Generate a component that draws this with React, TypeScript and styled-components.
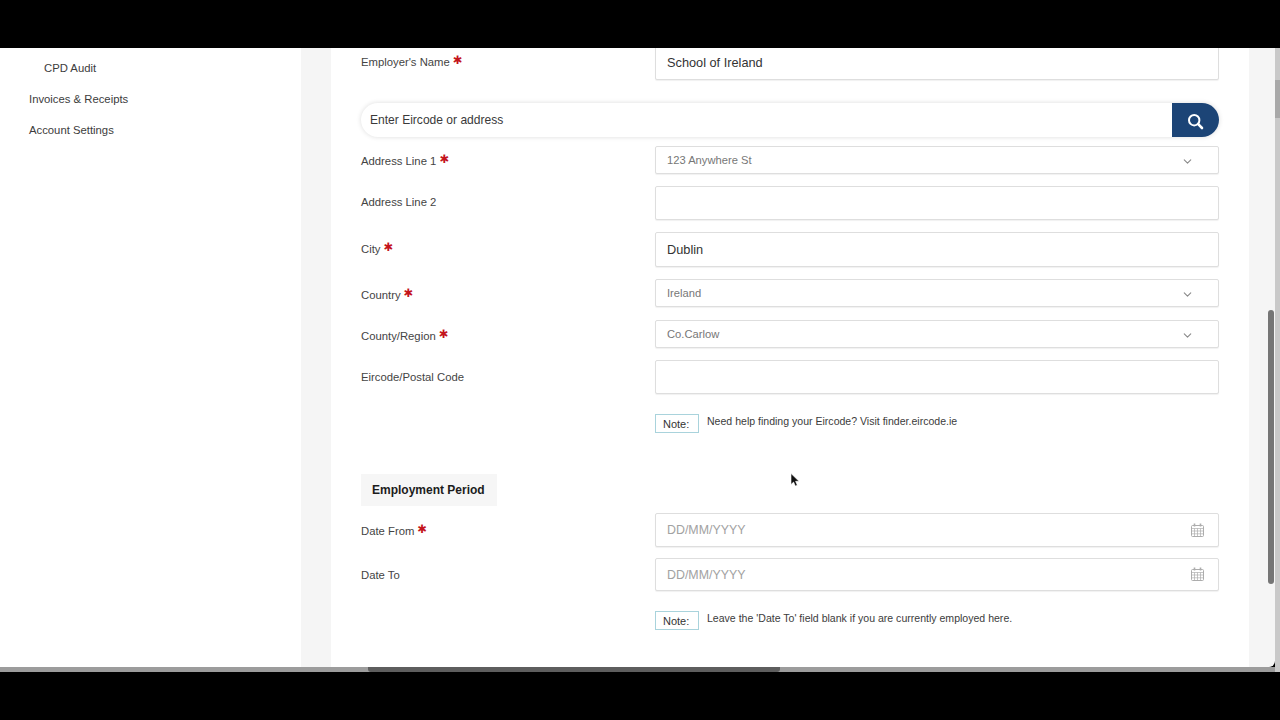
import React from 'react';
import styled, {createGlobalStyle} from 'styled-components';
import {ChevronDown} from 'lucide-react';

const GlobalStyle = createGlobalStyle`
  html, body {
    margin: 0;
    height: 100%;
    background: #000;
    overflow: hidden;
  }
  body {
    font-family: "Liberation Sans", Arial, sans-serif;
  }
`;

const Screen = styled.div`
  width: 1280px;
  height: 720px;
  padding-top: 48px;
  box-sizing: border-box;
  background: #000;
`;

const Desktop = styled.div`
  display: flex;
  height: 624px;
`;

const Browser = styled.div`
  width: 1275px;
  display: flex;
  flex-direction: column;
`;

const Page = styled.div`
  height: 619px;
  display: flex;
  background: #f5f5f5;
  overflow: hidden;
  border-bottom-right-radius: 6px;
`;

const Sidebar = styled.nav`
  width: 301px;
  background: #fff;
  padding: 13px 0 0 29px;
  box-sizing: border-box;
  display: flex;
  flex-direction: column;
  gap: 16px;
`;

const NavItem = styled.a<{$sub?: boolean}>`
  font-size: 11.3px;
  line-height: 15px;
  color: #3c3c3c;
  margin-left: ${p => (p.$sub ? '15px' : '0')};
`;

const Main = styled.main`
  margin-left: 30px;
  width: 918px;
  background: #fff;
  padding: 0 30px;
  box-sizing: border-box;
  overflow: hidden;
`;

const Rail = styled.div`
  flex: 1;
  padding: 262px 0 0 19px;
`;

const Thumb = styled.div`
  width: 6px;
  height: 274px;
  border-radius: 3px;
  background: #767676;
`;

const BottomEdge = styled.div`
  height: 5px;
  background: #9c9c9c;
  display: flex;
`;

const BottomTab = styled.div`
  margin-left: 368px;
  width: 412px;
  background: #5e5e5e;
  border-radius: 0 0 3px 3px;
`;

const RightEdge = styled.div`
  width: 5px;
  height: 624px;
  padding-top: 32px;
  box-sizing: border-box;
  background: #c9c9c9;
`;

const RightTab = styled.div`
  height: 38px;
  background: #a9a9a9;
`;

const Row = styled.div<{$top: number}>`
  display: grid;
  grid-template-columns: 294px 564px;
  align-items: center;
  margin-top: ${p => p.$top}px;
`;

const Label = styled.label<{$shift?: number}>`
  font-size: 11.3px;
  line-height: 15px;
  color: #444;
  display: flex;
  align-items: flex-start;
  gap: 3px;
  margin-top: ${p => p.$shift ?? 0}px;
`;

const Star = styled.span`
  font-family: "DejaVu Sans", sans-serif;
  font-size: 11.5px;
  line-height: 11px;
  color: #c4141c;
`;

const Field = styled.div<{$h: number}>`
  height: ${p => p.$h}px;
  box-sizing: border-box;
  border: 1px solid #dedede;
  border-radius: 2px;
  box-shadow: 0 1px 1px rgba(0, 0, 0, 0.06);
  padding: 0 11px;
  display: flex;
  align-items: center;
  justify-content: space-between;
  font-size: 12.75px;
  color: #333;
  background: #fff;
`;

const SelectText = styled.span`
  font-size: 11.2px;
  color: #777;
`;

const Placeholder = styled.span`
  font-size: 12.4px;
  color: #a2a2a2;
`;

const Chevron = styled(ChevronDown)`
  width: 13px;
  height: 13px;
  margin: 3px 13px 0 0;
  color: #8a8a8a;
`;

const CalendarSvg = styled.svg`
  width: 13px;
  height: 14px;
  margin: 0 3px 1px 0;
  color: #adadad;
`;

const SearchBar = styled.div`
  margin-top: 23px;
  height: 34px;
  width: 858px;
  display: flex;
  border-radius: 17px;
  box-shadow: 0 0 5px rgba(0, 0, 0, 0.14);
`;

const SearchText = styled.div`
  flex: 1;
  padding-left: 9px;
  display: flex;
  align-items: center;
  font-size: 12.05px;
  color: #3a3a3a;
`;

const SearchButton = styled.button`
  width: 47px;
  border: 0;
  padding: 2px 0 0 0;
  background: #1c4476;
  border-radius: 0 17px 17px 0;
  display: flex;
  align-items: center;
  justify-content: center;
`;

const NoteRow = styled.div<{$top: number}>`
  margin: ${p => p.$top}px 0 0 294px;
  display: flex;
  gap: 8px;
  align-items: flex-start;
`;

const NoteTag = styled.div`
  width: 44px;
  height: 19px;
  box-sizing: border-box;
  border: 1px solid #a9d3dc;
  padding-left: 7px;
  display: flex;
  align-items: center;
  font-size: 11px;
  color: #333;
`;

const NoteText = styled.p`
  margin: 0;
  font-size: 10.55px;
  line-height: 14px;
  color: #3c3c3c;
`;

const SectionChip = styled.div`
  margin-top: 41px;
  width: 136px;
  height: 32px;
  box-sizing: border-box;
  padding-left: 11px;
  display: flex;
  align-items: center;
  background: #f6f6f6;
  font-size: 12px;
  font-weight: 700;
  color: #1c1c1c;
`;

const CursorSvg = styled.svg`
  position: absolute;
  left: 790px;
  top: 473px;
  width: 10px;
  height: 15px;
`;

const Calendar = () => (
  <CalendarSvg viewBox="0 0 13 14" fill="none" stroke="currentColor" strokeWidth="1">
    <rect x="0.5" y="2.5" width="12" height="11" rx="1" />
    <path d="M0.5 5.5h12M0.5 8h12M0.5 10.8h12M3.5 5.5v8M6.5 5.5v8M9.5 5.5v8" strokeWidth="0.7" />
    <path d="M3.5 0.5v3M9.5 0.5v3" strokeWidth="1.6" />
  </CalendarSvg>
);

const Required = () => <Star>✱</Star>;

export default function App() {
  return (
    <>
      <GlobalStyle />
      <Screen>
        <Desktop>
          <Browser>
            <Page>
              <Sidebar>
                <NavItem $sub>CPD Audit</NavItem>
                <NavItem>Invoices &amp; Receipts</NavItem>
                <NavItem>Account Settings</NavItem>
              </Sidebar>
              <Main>
                <Row $top={-4}>
                  <Label>Employer's Name <Required /></Label>
                  <Field $h={36}>School of Ireland</Field>
                </Row>
                <SearchBar>
                  <SearchText>Enter Eircode or address</SearchText>
                  <SearchButton aria-label="Search">
                    <svg width="17" height="17" viewBox="0 0 17 17" fill="none" stroke="#fff">
                      <circle cx="7.2" cy="7.2" r="5.2" strokeWidth="2" />
                      <path d="M11.2 11.2 15 15" strokeWidth="2.6" strokeLinecap="round" />
                    </svg>
                  </SearchButton>
                </SearchBar>
                <Row $top={9}>
                  <Label $shift={3}>Address Line 1 <Required /></Label>
                  <Field $h={28}>
                    <SelectText>123 Anywhere St</SelectText>
                    <Chevron />
                  </Field>
                </Row>
                <Row $top={12}>
                  <Label $shift={-2}>Address Line 2</Label>
                  <Field $h={34} />
                </Row>
                <Row $top={12}>
                  <Label $shift={-1}>City <Required /></Label>
                  <Field $h={35}>Dublin</Field>
                </Row>
                <Row $top={12}>
                  <Label $shift={4}>Country <Required /></Label>
                  <Field $h={28}>
                    <SelectText>Ireland</SelectText>
                    <Chevron />
                  </Field>
                </Row>
                <Row $top={13}>
                  <Label $shift={4}>County/Region <Required /></Label>
                  <Field $h={28}>
                    <SelectText>Co.Carlow</SelectText>
                    <Chevron />
                  </Field>
                </Row>
                <Row $top={12}>
                  <Label>Eircode/Postal Code</Label>
                  <Field $h={34} />
                </Row>
                <NoteRow $top={20}>
                  <NoteTag>Note:</NoteTag>
                  <NoteText>Need help finding your Eircode? Visit finder.eircode.ie</NoteText>
                </NoteRow>
                <SectionChip>Employment Period</SectionChip>
                <Row $top={7}>
                  <Label $shift={2}>Date From <Required /></Label>
                  <Field $h={34}>
                    <Placeholder>DD/MM/YYYY</Placeholder>
                    <Calendar />
                  </Field>
                </Row>
                <Row $top={11}>
                  <Label $shift={2}>Date To</Label>
                  <Field $h={33}>
                    <Placeholder>DD/MM/YYYY</Placeholder>
                    <Calendar />
                  </Field>
                </Row>
                <NoteRow $top={20}>
                  <NoteTag>Note:</NoteTag>
                  <NoteText>Leave the 'Date To' field blank if you are currently employed here.</NoteText>
                </NoteRow>
              </Main>
              <Rail>
                <Thumb />
              </Rail>
            </Page>
            <BottomEdge>
              <BottomTab />
            </BottomEdge>
          </Browser>
          <RightEdge>
            <RightTab />
          </RightEdge>
        </Desktop>
        <CursorSvg viewBox="0 0 10 15">
          <path d="M1 0.5v11l2.6-2.4 1.7 4 2-0.9-1.7-3.9h3.4z" fill="#111" stroke="#fff" strokeWidth="0.6" />
        </CursorSvg>
      </Screen>
    </>
  );
}
